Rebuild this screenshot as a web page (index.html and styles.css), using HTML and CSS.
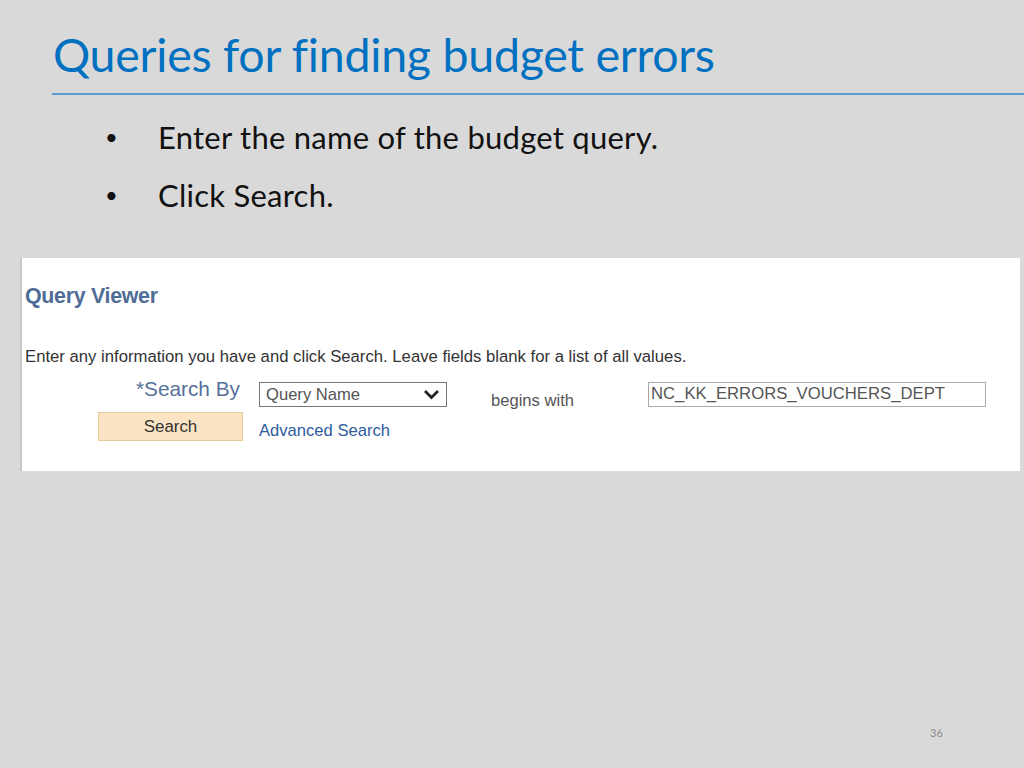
FILE: index.html
```html
<!DOCTYPE html>
<html lang="en">

<head>
  <meta charset="UTF-8">
  <title>Queries for finding budget errors</title>
  <link rel="stylesheet" href="styles.css">
</head>

<body>
  <div class="slide">

    <!-- Title -->
    <div class="slide-header">
      <h1>Queries for finding budget errors</h1>
    </div>

    <!-- Bullets -->
    <ul class="bullets">
      <li>Enter the name of the budget query.</li>
      <li>Click Search.</li>
    </ul>

    <!-- Screenshot of Query Viewer -->
    <div class="panel">
      <h2 class="panel-title">Query Viewer</h2>
      <p class="panel-hint">Enter any information you have and click Search. Leave fields blank for a list of all values.</p>

      <div class="search-grid">
        <label class="search-label">*Search By</label>
        <div class="select-box">
          <span>Query Name</span>
          <svg width="17" height="11" viewBox="0 0 17 11">
            <path d="M2 2 L8.5 8.5 L15 2" fill="none" stroke="#222" stroke-width="2.8"/>
          </svg>
        </div>
        <span class="begins">begins with</span>
        <div class="text-box">NC_KK_ERRORS_VOUCHERS_DEPT</div>

        <button class="search-btn">Search</button>
        <a class="adv-link">Advanced Search</a>
      </div>
    </div>

    <div class="page-num">36</div>
  </div>
</body>

</html>
```

FILE: styles.css
```css
body {
  margin: 0;
  background-color: #d9d9d9;
  font-family: Lato, "Open Sans", sans-serif;
}

.slide {
  position: relative;
  width: 1024px;
  height: 768px;
  overflow: hidden;
}

.slide-header {
  margin-left: 52px;
  padding-top: 26px;
  border-bottom: 2px solid #5b9bd5;
}

.slide-header h1 {
  margin: 0 0 0 1px;
  height: 67px;
  font-weight: normal;
  font-size: 46.5px;
  line-height: 56px;
  color: #0070c0;
  letter-spacing: -0.25px;
}

.bullets {
  list-style: none;
  margin: 16px 0 0 0;
  padding: 0;
}

.bullets li {
  position: relative;
  padding-left: 158px;
  height: 58px;
  font-size: 31px;
  line-height: 52px;
  letter-spacing: 0.25px;
  color: #111;
}

.bullets li::before {
  content: "\2022";
  position: absolute;
  left: 105px;
  font-size: 22px;
}

.panel {
  margin: 31px 4px 0 20px;
  height: 213px;
  background-color: #fff;
  border-left: 2px solid #c8c8c8;
  font-family: "Liberation Sans", Arial, sans-serif;
  box-sizing: border-box;
  padding: 26px 0 0 3px;
}

.panel-title {
  margin: 0;
  font-size: 21.4px;
  line-height: 25px;
  font-weight: bold;
  color: #4e6c96;
  letter-spacing: -0.3px;
}

.panel-hint {
  margin: 38px 0 0 0;
  font-size: 16.7px;
  line-height: 20px;
  color: #333;
}

.search-grid {
  display: grid;
  grid-template-columns: 222px 188px 177px 338px;
  grid-template-rows: 25px 29px;
  column-gap: 12px;
  row-gap: 5px;
  margin-top: 15px;
  align-items: center;
}

.search-label {
  justify-self: end;
  margin: -11px 7px 0 0;
  font-size: 20.8px;
  line-height: 24px;
  color: #56719a;
}

.select-box {
  height: 25px;
  box-sizing: border-box;
  border: 1px solid #777;
  display: flex;
  align-items: center;
  justify-content: space-between;
  padding: 0 6px;
  font-size: 16.6px;
  color: #555;
}

.begins {
  padding: 13px 0 0 32px;
  font-size: 16.6px;
  color: #555;
}

.text-box {
  height: 25px;
  box-sizing: border-box;
  border: 1px solid #aaa;
  padding: 1px 2px;
  font-size: 16.7px;
  color: #555;
}

.search-btn {
  justify-self: end;
  margin-right: 4px;
  width: 145px;
  height: 29px;
  background-color: #fbe4c4;
  border: 1px solid #e8c89b;
  font-family: "Liberation Sans", Arial, sans-serif;
  font-size: 16.9px;
  color: #333;
}

.adv-link {
  margin-top: 9px;
  font-size: 16.6px;
  color: #2e5c9e;
}

.page-num {
  position: absolute;
  left: 930px;
  top: 726px;
  font-size: 11px;
  color: #8c8c8c;
}
```
